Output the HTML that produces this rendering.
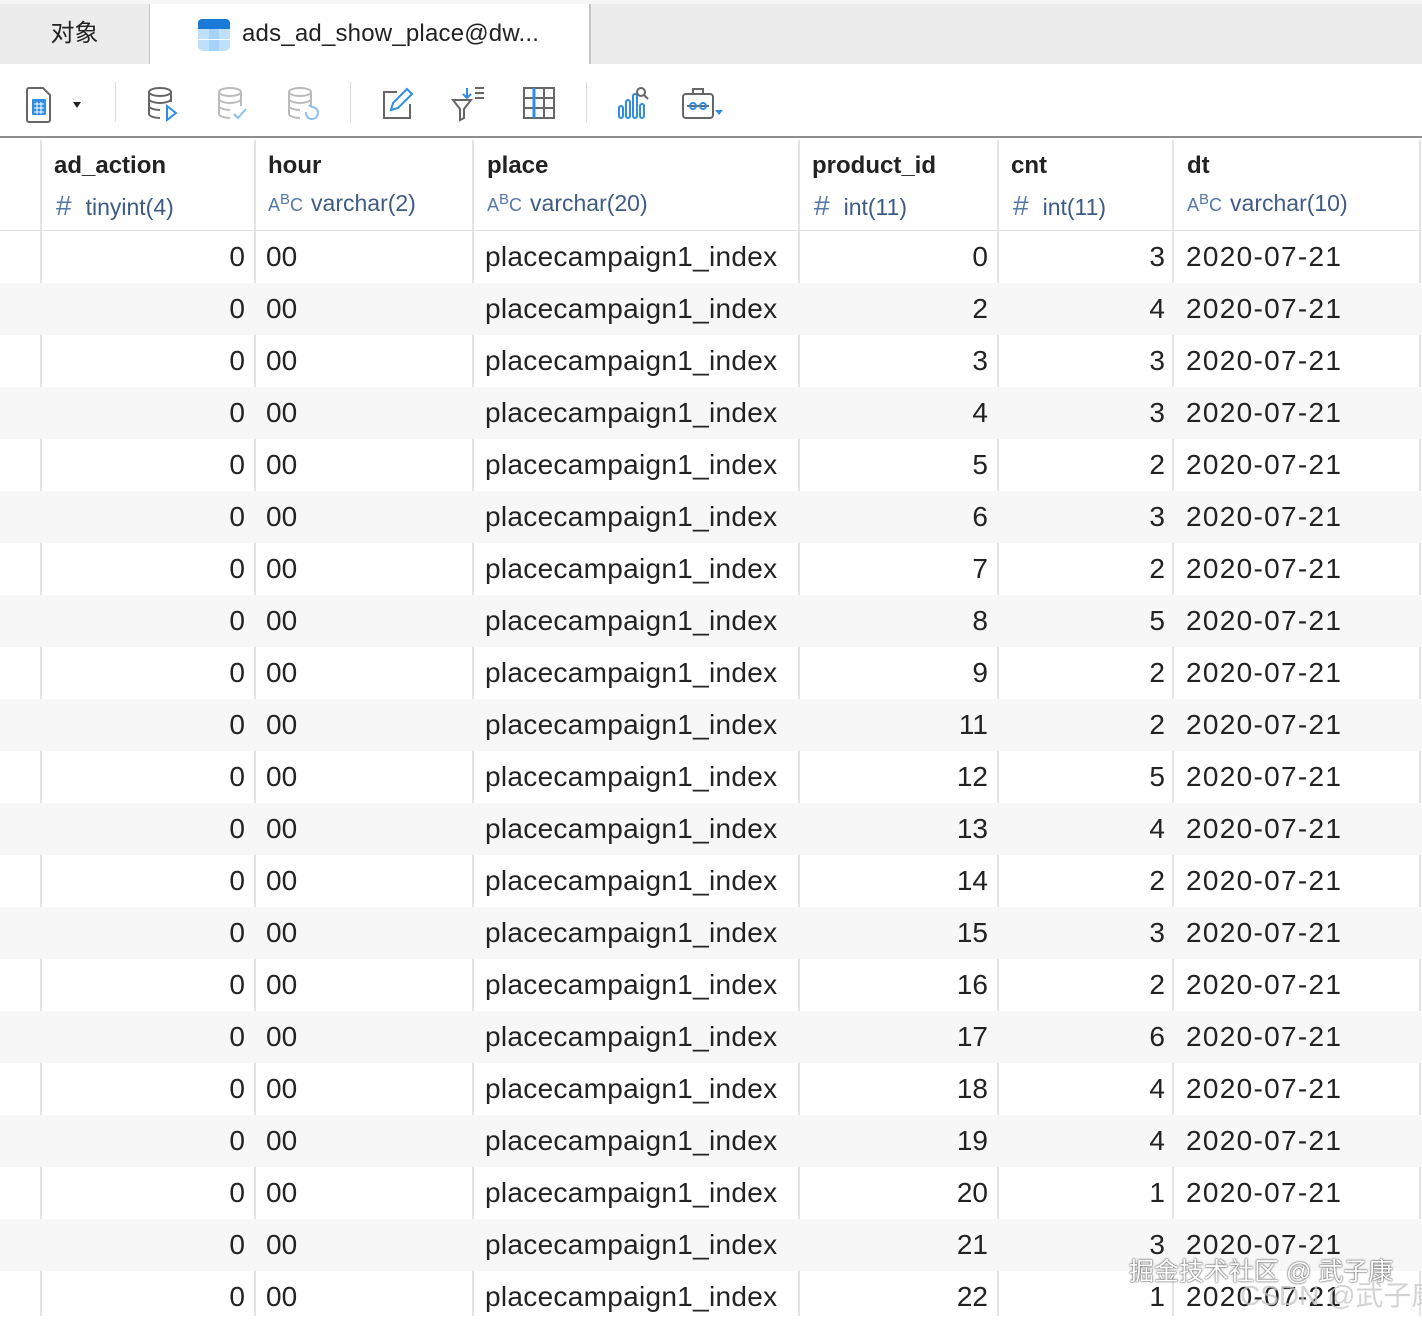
<!DOCTYPE html>
<html><head><meta charset="utf-8"><style>
*{margin:0;padding:0;box-sizing:border-box}
body{width:1422px;height:1316px;overflow:hidden;background:#fff;font-family:"Liberation Sans","Noto Sans CJK SC",sans-serif;color:#222;position:relative}
.abs{position:absolute}
.tabbar{left:0;top:0;width:1422px;height:64px;background:#ececec;border-top:4px solid #f6f6f6}
.tab1{left:0;top:4px;width:150px;height:60px;font-size:24px;line-height:60px;text-align:center;border-right:1px solid #c8c8c8}
.tab2{left:150px;top:4px;width:441px;height:60px;background:#fff;border-right:2px solid #c4c4c4;font-size:24px;line-height:60px;padding-left:92px;letter-spacing:.2px}
.toolbar{left:0;top:64px;width:1422px;height:74px;border-bottom:2px solid #8e8e8e}
.sep{top:82px;width:1px;height:40px;background:#ddd}
.hdr{top:140px;height:91px;border-bottom:1px solid #e2e2e2}
.vl{top:140px;width:2px;height:1176px;background:#e4e4e4}
.hn{position:absolute;top:12px;font-size:24px;font-weight:bold;color:#222}
.ht{position:absolute;top:50px;font-size:23px;color:#3e5b85;white-space:nowrap}
.ht i{font-style:normal;font-size:28px;color:#5477a8;margin-right:14px}
.ht b{font-weight:normal;font-size:18px;color:#5477a8;margin-right:8px}
.row{position:absolute;left:0;width:1422px;height:52px;font-size:28px;line-height:52px}
.row.alt{background:#f7f7f7}
.row span{position:absolute;top:0}
.row span:nth-child(3){letter-spacing:.3px}
.row span:nth-child(6){letter-spacing:1.3px}
.r{text-align:right}
</style></head><body>
<div class="abs tabbar"></div>
<div class="abs tab1">对象</div>
<div class="abs tab2">ads_ad_show_place@dw...</div>
<svg class="abs" style="left:197px;top:18px" width="34" height="34" viewBox="0 0 34 34"><rect x="1" y="1" width="32" height="32" rx="5" fill="#bfe0fb"/><rect x="1" y="1" width="32" height="10" rx="4" fill="#1b7ad8"/><rect x="1" y="7" width="32" height="4" fill="#1b7ad8"/><rect x="12" y="11" width="10" height="22" fill="#a6d2f7"/><rect x="1" y="21" width="32" height="1" fill="#fff"/></svg>
<div class="abs toolbar"></div>
<svg class="abs" style="left:20px;top:82px" width="400" height="44" viewBox="0 0 400 44" fill="none" stroke-width="2">
<path d="M9 6h14l7 7v25a2 2 0 0 1-2 2H9a2 2 0 0 1-2-2V8a2 2 0 0 1 2-2z" stroke="#666"/><rect x="12" y="17" width="14" height="16" rx="1" fill="#2f8de4"/><path d="M14 22h10M14 26h10M14 30h10M17 20v12M21 20v12" stroke="#fff" stroke-width="1"/>
<path d="M53 20l4 6 4-6z" fill="#222" stroke="none"/>
<g stroke="#666"><ellipse cx="140" cy="10" rx="11" ry="4"/><path d="M129 10v22c0 2 5 4 11 4M151 10v10M129 17c0 2 5 4 11 4s11-2 11-4M129 24c0 2 5 4 11 4"/></g><path d="M147 24l9 7-9 7z" stroke="#2f8de4"/>
<g stroke="#bbb"><ellipse cx="210" cy="10" rx="11" ry="4"/><path d="M199 10v22c0 2 5 4 11 4M221 10v14M199 17c0 2 5 4 11 4s11-2 11-4M199 24c0 2 5 4 11 4"/></g><path d="M214 32l4 4 8-9" stroke="#8cc0ee"/>
<g stroke="#bbb"><ellipse cx="280" cy="10" rx="11" ry="4"/><path d="M269 10v22c0 2 5 4 11 4M291 10v14M269 17c0 2 5 4 11 4s11-2 11-4M269 24c0 2 5 4 11 4"/></g><path d="M286 30a6 6 0 1 0 6-5l-3-2" stroke="#8cc0ee"/>
</svg>
<div class="abs sep" style="left:115px"></div>
<div class="abs sep" style="left:350px"></div>
<div class="abs sep" style="left:586px"></div>
<svg class="abs" style="left:375px;top:82px" width="370" height="44" viewBox="0 0 370 44" fill="none" stroke-width="2">
<path d="M22 10H9v26h26V22" stroke="#666"/><path d="M16 28l2-7 14-14 5 5-14 14z" stroke="#2f8de4"/>
<path d="M78 18h18l-7 9v9l-4 2V27z" stroke="#666"/><path d="M92 6v10M88 12l4 4 4-4" stroke="#2f8de4"/><path d="M100 6h9M100 11h9M100 16h9" stroke="#666"/>
<rect x="149" y="6" width="30" height="30" stroke="#666"/><path d="M149 16h30M149 26h30M159 6v30M169 6v30" stroke="#666"/><path d="M159 6v30" stroke="#2f8de4" stroke-width="3"/>
<g stroke="#2f8de4"><rect x="244" y="24" width="4" height="12" rx="2"/><rect x="251" y="18" width="4" height="18" rx="2"/><rect x="258" y="12" width="4" height="24" rx="2"/><rect x="265" y="22" width="4" height="14" rx="2"/></g><circle cx="266" cy="10" r="4" stroke="#666"/><path d="M269 13l4 4" stroke="#666"/>
<rect x="308" y="12" width="30" height="24" rx="3" stroke="#666"/><path d="M318 12V7h10v5M312 24h22" stroke="#666"/><circle cx="318" cy="24" r="3" stroke="#2f8de4"/><circle cx="328" cy="24" r="3" stroke="#2f8de4"/><path d="M340 28h8l-4 5z" fill="#2f8de4" stroke="none"/>
</svg>

<div class="abs hdr" style="left:0;width:1422px"></div>
<div class="abs vl" style="left:40px"></div>
<div class="abs vl" style="left:254px"></div>
<div class="abs vl" style="left:472px"></div>
<div class="abs vl" style="left:798px"></div>
<div class="abs vl" style="left:997px"></div>
<div class="abs vl" style="left:1172px"></div>
<div class="abs vl" style="left:1419px"></div>
<div class="abs" style="left:0;top:140px;width:1422px;height:91px">
<div class="hn" style="left:54px">ad_action</div><div class="ht" style="left:56px"><i>#</i>tinyint(4)</div>
<div class="hn" style="left:268px">hour</div><div class="ht" style="left:268px"><b>A<sup>B</sup>C</b>varchar(2)</div>
<div class="hn" style="left:487px">place</div><div class="ht" style="left:487px"><b>A<sup>B</sup>C</b>varchar(20)</div>
<div class="hn" style="left:812px">product_id</div><div class="ht" style="left:814px"><i>#</i>int(11)</div>
<div class="hn" style="left:1011px">cnt</div><div class="ht" style="left:1013px"><i>#</i>int(11)</div>
<div class="hn" style="left:1187px">dt</div><div class="ht" style="left:1187px"><b>A<sup>B</sup>C</b>varchar(10)</div>
</div>

<div id="rows">
<div class="row" style="top:231px"><span class="r" style="right:1177px">0</span><span style="left:266px">00</span><span style="left:485px">placecampaign1_index</span><span class="r" style="right:434px">0</span><span class="r" style="right:257px">3</span><span style="left:1186px">2020-07-21</span></div>
<div class="row alt" style="top:283px"><span class="r" style="right:1177px">0</span><span style="left:266px">00</span><span style="left:485px">placecampaign1_index</span><span class="r" style="right:434px">2</span><span class="r" style="right:257px">4</span><span style="left:1186px">2020-07-21</span></div>
<div class="row" style="top:335px"><span class="r" style="right:1177px">0</span><span style="left:266px">00</span><span style="left:485px">placecampaign1_index</span><span class="r" style="right:434px">3</span><span class="r" style="right:257px">3</span><span style="left:1186px">2020-07-21</span></div>
<div class="row alt" style="top:387px"><span class="r" style="right:1177px">0</span><span style="left:266px">00</span><span style="left:485px">placecampaign1_index</span><span class="r" style="right:434px">4</span><span class="r" style="right:257px">3</span><span style="left:1186px">2020-07-21</span></div>
<div class="row" style="top:439px"><span class="r" style="right:1177px">0</span><span style="left:266px">00</span><span style="left:485px">placecampaign1_index</span><span class="r" style="right:434px">5</span><span class="r" style="right:257px">2</span><span style="left:1186px">2020-07-21</span></div>
<div class="row alt" style="top:491px"><span class="r" style="right:1177px">0</span><span style="left:266px">00</span><span style="left:485px">placecampaign1_index</span><span class="r" style="right:434px">6</span><span class="r" style="right:257px">3</span><span style="left:1186px">2020-07-21</span></div>
<div class="row" style="top:543px"><span class="r" style="right:1177px">0</span><span style="left:266px">00</span><span style="left:485px">placecampaign1_index</span><span class="r" style="right:434px">7</span><span class="r" style="right:257px">2</span><span style="left:1186px">2020-07-21</span></div>
<div class="row alt" style="top:595px"><span class="r" style="right:1177px">0</span><span style="left:266px">00</span><span style="left:485px">placecampaign1_index</span><span class="r" style="right:434px">8</span><span class="r" style="right:257px">5</span><span style="left:1186px">2020-07-21</span></div>
<div class="row" style="top:647px"><span class="r" style="right:1177px">0</span><span style="left:266px">00</span><span style="left:485px">placecampaign1_index</span><span class="r" style="right:434px">9</span><span class="r" style="right:257px">2</span><span style="left:1186px">2020-07-21</span></div>
<div class="row alt" style="top:699px"><span class="r" style="right:1177px">0</span><span style="left:266px">00</span><span style="left:485px">placecampaign1_index</span><span class="r" style="right:434px">11</span><span class="r" style="right:257px">2</span><span style="left:1186px">2020-07-21</span></div>
<div class="row" style="top:751px"><span class="r" style="right:1177px">0</span><span style="left:266px">00</span><span style="left:485px">placecampaign1_index</span><span class="r" style="right:434px">12</span><span class="r" style="right:257px">5</span><span style="left:1186px">2020-07-21</span></div>
<div class="row alt" style="top:803px"><span class="r" style="right:1177px">0</span><span style="left:266px">00</span><span style="left:485px">placecampaign1_index</span><span class="r" style="right:434px">13</span><span class="r" style="right:257px">4</span><span style="left:1186px">2020-07-21</span></div>
<div class="row" style="top:855px"><span class="r" style="right:1177px">0</span><span style="left:266px">00</span><span style="left:485px">placecampaign1_index</span><span class="r" style="right:434px">14</span><span class="r" style="right:257px">2</span><span style="left:1186px">2020-07-21</span></div>
<div class="row alt" style="top:907px"><span class="r" style="right:1177px">0</span><span style="left:266px">00</span><span style="left:485px">placecampaign1_index</span><span class="r" style="right:434px">15</span><span class="r" style="right:257px">3</span><span style="left:1186px">2020-07-21</span></div>
<div class="row" style="top:959px"><span class="r" style="right:1177px">0</span><span style="left:266px">00</span><span style="left:485px">placecampaign1_index</span><span class="r" style="right:434px">16</span><span class="r" style="right:257px">2</span><span style="left:1186px">2020-07-21</span></div>
<div class="row alt" style="top:1011px"><span class="r" style="right:1177px">0</span><span style="left:266px">00</span><span style="left:485px">placecampaign1_index</span><span class="r" style="right:434px">17</span><span class="r" style="right:257px">6</span><span style="left:1186px">2020-07-21</span></div>
<div class="row" style="top:1063px"><span class="r" style="right:1177px">0</span><span style="left:266px">00</span><span style="left:485px">placecampaign1_index</span><span class="r" style="right:434px">18</span><span class="r" style="right:257px">4</span><span style="left:1186px">2020-07-21</span></div>
<div class="row alt" style="top:1115px"><span class="r" style="right:1177px">0</span><span style="left:266px">00</span><span style="left:485px">placecampaign1_index</span><span class="r" style="right:434px">19</span><span class="r" style="right:257px">4</span><span style="left:1186px">2020-07-21</span></div>
<div class="row" style="top:1167px"><span class="r" style="right:1177px">0</span><span style="left:266px">00</span><span style="left:485px">placecampaign1_index</span><span class="r" style="right:434px">20</span><span class="r" style="right:257px">1</span><span style="left:1186px">2020-07-21</span></div>
<div class="row alt" style="top:1219px"><span class="r" style="right:1177px">0</span><span style="left:266px">00</span><span style="left:485px">placecampaign1_index</span><span class="r" style="right:434px">21</span><span class="r" style="right:257px">3</span><span style="left:1186px">2020-07-21</span></div>
<div class="row" style="top:1271px"><span class="r" style="right:1177px">0</span><span style="left:266px">00</span><span style="left:485px">placecampaign1_index</span><span class="r" style="right:434px">22</span><span class="r" style="right:257px">1</span><span style="left:1186px">2020-07-21</span></div>
</div>
<div class="abs" style="left:1129px;top:1252px;font-size:25px;color:#fff;text-shadow:0 0 2px #555,0 0 1px #333;white-space:nowrap">掘金技术社区 @ 武子康</div>
<div class="abs" style="left:1240px;top:1274px;font-size:28px;color:rgba(200,200,200,.8);white-space:nowrap">CSDN @武子康</div>
</body></html>
